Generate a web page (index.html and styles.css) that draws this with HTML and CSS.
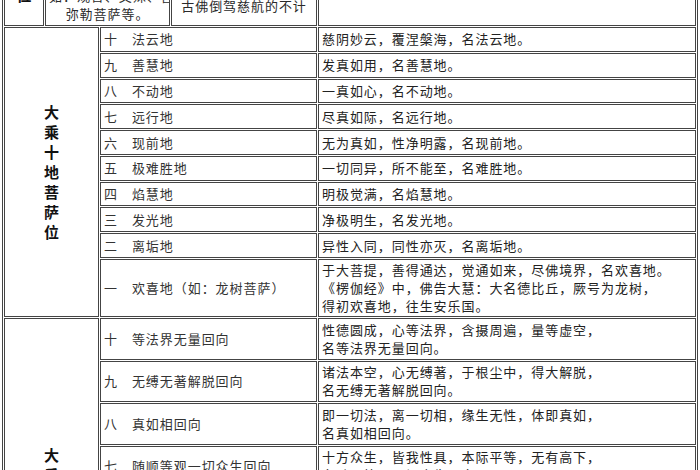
FILE: index.html
```html
<!DOCTYPE html>
<html lang="zh">
<head>
<meta charset="utf-8">
<title>菩萨位次表</title>
<link rel="stylesheet" href="styles.css">
</head>
<body>
<div class="page">
<table class="grid">
<colgroup>
<col class="c1"><col class="c2"><col class="c3"><col class="c4"><col class="c5">
</colgroup>
<tbody>
<tr class="head-row">
<td class="stub"><div class="label">位</div></td>
<td colspan="2" class="center">如：观音、文殊、普贤、<br>弥勒菩萨等。</td>
<td class="center lift">古佛倒驾慈航的不计</td>
<td></td>
</tr>

<tr class="one">
<td colspan="2" rowspan="10" class="group"><div class="label">大乘十地菩萨位</div></td>
<td colspan="2" class="name">十　法云地</td>
<td class="desc">慈阴妙云，覆涅槃海，名法云地。</td>
</tr>
<tr class="one"><td colspan="2" class="name">九　善慧地</td><td class="desc">发真如用，名善慧地。</td></tr>
<tr class="one"><td colspan="2" class="name">八　不动地</td><td class="desc">一真如心，名不动地。</td></tr>
<tr class="one"><td colspan="2" class="name">七　远行地</td><td class="desc">尽真如际，名远行地。</td></tr>
<tr class="one"><td colspan="2" class="name">六　现前地</td><td class="desc">无为真如，性净明露，名现前地。</td></tr>
<tr class="one"><td colspan="2" class="name">五　极难胜地</td><td class="desc">一切同异，所不能至，名难胜地。</td></tr>
<tr class="one"><td colspan="2" class="name">四　焰慧地</td><td class="desc">明极觉满，名焰慧地。</td></tr>
<tr class="one"><td colspan="2" class="name">三　发光地</td><td class="desc">净极明生，名发光地。</td></tr>
<tr class="one"><td colspan="2" class="name">二　离垢地</td><td class="desc">异性入同，同性亦灭，名离垢地。</td></tr>
<tr><td colspan="2" class="name">一　欢喜地（如：龙树菩萨）</td><td class="desc">于大菩提，善得通达，觉通如来，尽佛境界，名欢喜地。<br>《楞伽经》中，佛告大慧：大名德比丘，厥号为龙树，<br>得初欢喜地，往生安乐国。</td></tr>

<tr class="two">
<td colspan="2" rowspan="10" class="group group-two"><div class="label">大乘十回向菩萨位</div></td>
<td colspan="2" class="name">十　等法界无量回向</td>
<td class="desc">性德圆成，心等法界，含摄周遍，量等虚空，<br>名等法界无量回向。</td>
</tr>
<tr class="two"><td colspan="2" class="name">九　无缚无著解脱回向</td><td class="desc">诸法本空，心无缚著，于根尘中，得大解脱，<br>名无缚无著解脱回向。</td></tr>
<tr class="two"><td colspan="2" class="name">八　真如相回向</td><td class="desc">即一切法，离一切相，缘生无性，体即真如，<br>名真如相回向。</td></tr>
<tr class="two"><td colspan="2" class="name">七　随顺等观一切众生回向</td><td class="desc">十方众生，皆我性具，本际平等，无有高下，<br>名随顺等观一切众生回向。</td></tr>
<tr class="two"><td colspan="2" class="name">六　随顺平等善根回向</td><td class="desc">真根既成，十方众生皆我本性，性圆成就，<br>名随顺平等善根回向。</td></tr>
<tr class="two"><td colspan="2" class="name">五　无尽功德藏回向</td><td class="desc">世界如来，互相涉入，得无挂碍，<br>名无尽功德藏回向。</td></tr>
<tr class="two"><td colspan="2" class="name">四　至一切处回向</td><td class="desc">精真发明，地如佛地，<br>名至一切处回向。</td></tr>
<tr class="two"><td colspan="2" class="name">三　等一切佛回向</td><td class="desc">本觉湛然，觉齐佛觉，<br>名等一切佛回向。</td></tr>
<tr class="two"><td colspan="2" class="name">二　不坏回向</td><td class="desc">坏其可坏，远离诸离，<br>名不坏回向。</td></tr>
<tr class="two"><td colspan="2" class="name">一　救护众生离众生相回向</td><td class="desc">救护众生，灭除度相，回无为心，向涅槃路，<br>名救护一切众生离众生相回向。</td></tr>
</tbody>
</table>
</div>
</body>
</html>
```

FILE: styles.css
```css
html, body {
  margin: 0;
  padding: 0;
  background: #ffffff;
}

body {
  font-family: "Noto Sans CJK SC", "Noto Sans", sans-serif;
  color: #2a2a2a;
  overflow: hidden;
}

.page {
  padding-left: 2px;
  margin-top: -18px;
}

.grid {
  width: 696px;
  table-layout: fixed;
  border-collapse: separate;
  border-spacing: 1px;
  border: 1px solid #444;
  font-size: 13px;
  letter-spacing: 0.95px;
  line-height: 18px;
}

.c1 { width: 40px; }
.c2 { width: 54px; }
.c3 { width: 70px; }
.c4 { width: 146px; }
.c5 { width: 378px; }

.grid td {
  border: 1px solid #444;
  padding: 1px 3px;
  vertical-align: middle;
  white-space: nowrap;
  overflow: hidden;
}

.grid .one td {
  padding-top: 2.4px;
  padding-bottom: 2.4px;
}

.grid .two td {
  padding-top: 1.75px;
  padding-bottom: 1.75px;
}

.grid .two .group-two {
  padding-bottom: 12px;
}

.grid .head-row td {
  padding-top: 2px;
  padding-bottom: 2px;
}

.center {
  text-align: center;
}

.grid .head-row .lift {
  vertical-align: top;
  padding-top: 12px;
}

.grid .head-row .stub {
  vertical-align: top;
  padding-top: 0;
}

.group {
  text-align: center;
}

.label {
  width: 1em;
  margin: 0 auto;
  white-space: normal;
  font-size: 15px;
  font-weight: 700;
  line-height: 20px;
  letter-spacing: 0;
  color: #111;
}

.name {
  padding-left: 4px;
  color: #333;
}

.desc {
  color: #222;
}
```
